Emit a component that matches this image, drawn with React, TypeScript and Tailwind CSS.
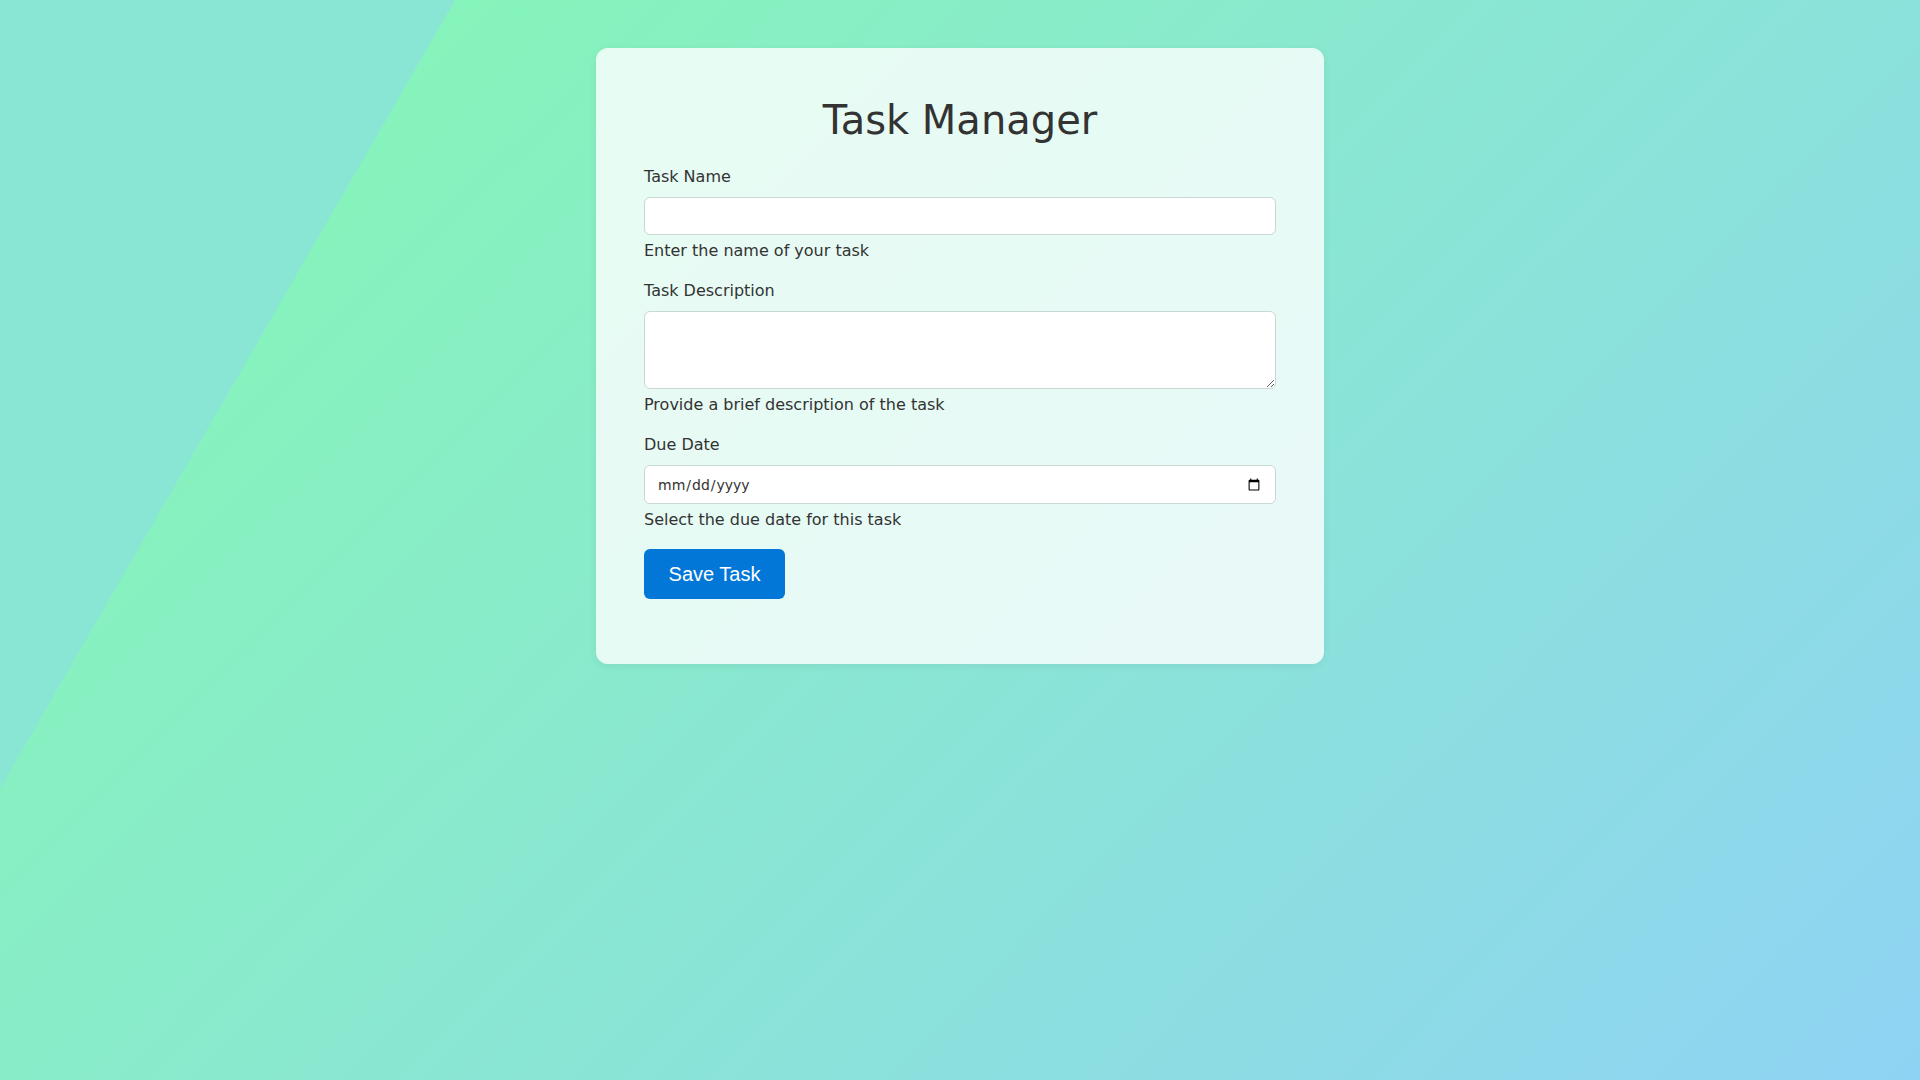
import { useState } from "react";

export default function App() {
  const [name, setName] = useState("");
  const [description, setDescription] = useState("");
  const [dueDate, setDueDate] = useState("");

  return (
    <div className="min-h-screen w-full flex justify-center pt-12 font-['DejaVu_Sans',sans-serif] text-[#333] bg-[linear-gradient(120deg,#89e5d4_17.9%,transparent_17.9%),linear-gradient(135deg,#84fab0_0%,#8fd3f4_100%)]">
      <div className="w-[728px] h-[616px] self-start bg-white/80 rounded-xl px-12 pt-12 pb-[65px] shadow-[0_2px_8px_rgba(0,0,0,0.06)]">
        <h1 className="text-[40px] leading-[48px] text-center font-normal text-[#333] mb-[21px]">Task Manager</h1>

        <form onSubmit={(e) => e.preventDefault()} className="flex flex-col">
          {/* Task name */}
          <label htmlFor="taskName" className="block text-base leading-6 mb-2">Task Name</label>
          <input
            id="taskName"
            type="text"
            value={name}
            onChange={(e) => setName(e.target.value)}
            className="block w-full h-[38px] px-3 bg-white border border-[#c8d8d5] rounded-md text-base focus:outline-none"
          />
          <p className="mt-1 text-base leading-6">Enter the name of your task</p>

          {/* Description */}
          <label htmlFor="taskDescription" className="block text-base leading-6 mb-2 mt-4">Task Description</label>
          <textarea
            id="taskDescription"
            value={description}
            onChange={(e) => setDescription(e.target.value)}
            className="block w-full h-[78px] px-3 py-1.5 bg-white border border-[#c8d8d5] rounded-md text-base focus:outline-none"
          />
          <p className="mt-1 text-base leading-6">Provide a brief description of the task</p>

          {/* Due date */}
          <label htmlFor="dueDate" className="block text-base leading-6 mb-2 mt-4">Due Date</label>
          <input
            id="dueDate"
            type="date"
            value={dueDate}
            onChange={(e) => setDueDate(e.target.value)}
            className="block w-full h-[39px] pl-3 pr-3 bg-white border border-[#c8d8d5] rounded-md text-sm text-[#333] focus:outline-none"
          />
          <p className="mt-1 text-base leading-6">Select the due date for this task</p>

          <button
            type="submit"
            className="mt-[17px] w-[141px] h-[50px] rounded-md bg-[#0277d8] text-white text-[20px] font-['Liberation_Sans',Arial,sans-serif] cursor-pointer"
          >
            Save Task
          </button>
        </form>
      </div>
    </div>
  );
}
